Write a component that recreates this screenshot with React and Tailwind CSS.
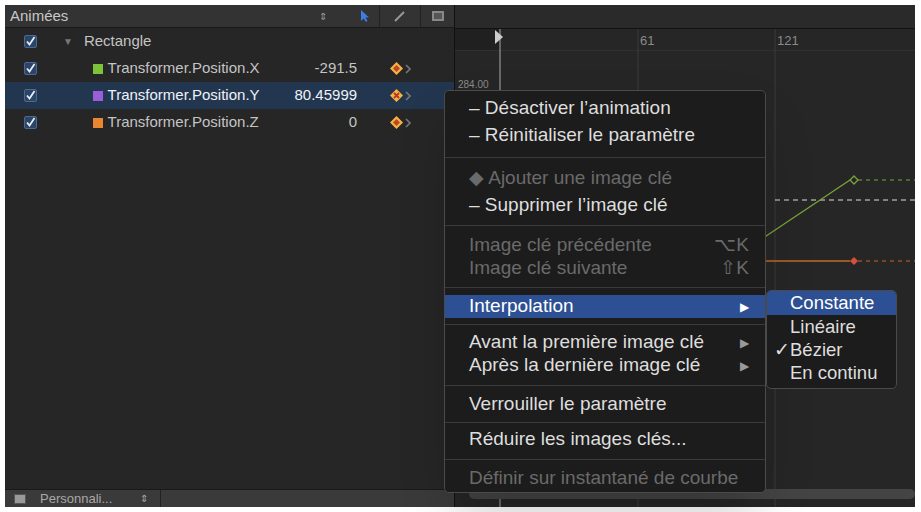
import React from "react";

const font = { fontFamily: '"Helvetica Neue", "Liberation Sans", Arial, sans-serif' };

const Check = () => (
  <div className="w-[13px] h-[13px] rounded-[2px] bg-[#2c4566] border border-[#4a6a94] flex items-center justify-center">
    <svg width="11" height="11" viewBox="0 0 11 11"><path d="M2 5.5 L4.5 8.5 L9.5 1" stroke="#e6eefa" strokeWidth="1.8" fill="none" /></svg>
  </div>
);

const Key = ({ x }) => (
  <div className="flex items-center gap-[1px]">
    <svg width="15" height="15" viewBox="0 0 15 15">
      <path d="M7.5 1 L14 7.5 L7.5 14 L1 7.5Z" fill="#f2b640" />
      <path d="M7.5 4 L11 7.5 L7.5 11 L4 7.5Z" fill={x ? "#f2b640" : "#c2432a"} />
      {x && <path d="M5 5 L10 10 M10 5 L5 10" stroke="#c2302a" strokeWidth="1.8" />}
    </svg>
    <svg width="6" height="10" viewBox="0 0 6 10"><path d="M1 1 L5 5 L1 9" stroke="#777" strokeWidth="1.6" fill="none" /></svg>
  </div>
);

const Row = ({ color, name, value, sel, x }) => (
  <div className={`h-[27px] flex items-center text-[15px] ${sel ? "bg-[#23364f] text-[#eef2f7]" : "text-[#c4c4c4]"}`}>
    <div className="w-[45px] pl-[19px]"><Check /></div>
    <div className="w-[245px] pl-[43px] flex items-center gap-[5px] whitespace-nowrap">
      <span className="w-[10px] h-[10px] shrink-0" style={{ background: color }} />
      {name}
    </div>
    <div className="w-[75px] text-right pr-[8px] overflow-hidden whitespace-nowrap">{value}</div>
    <div className="w-[90px] pl-[24px]"><Key x={x} /></div>
  </div>
);

const Item = ({ children, dim, sub, hi, right }) => (
  <div className={`h-[23px] flex items-center pl-[24px] pr-[16px] text-[19px] whitespace-nowrap ${hi ? "bg-[#2d4f93] text-white" : dim ? "text-[#6a6a6a]" : "text-[#dedede]"}`}>
    <span className="flex-1">{children}</span>
    {sub && <span className={`text-[12px] ${hi ? "text-white" : "text-[#9a9a9a]"}`}>▶</span>}
    {right && <span className="text-[#6a6a6a]">{right}</span>}
  </div>
);

const Sep = ({ h }) => (
  <div className="flex items-center" style={{ height: h }}>
    <div className="h-px w-full bg-[#3a3a3a]" />
  </div>
);

export default function App() {
  return (
    <div className="w-[921px] h-[512px] bg-white p-[5px] pr-[6px] pb-[5px] relative overflow-hidden" style={font}>
      <div className="flex h-full bg-[#262626]">
        {/* left panel */}
        <div className="w-[450px] flex flex-col border-r border-[#111]">
          <div className="h-[23px] bg-[#333] flex items-center text-[15px] text-[#c8c8c8] border-b border-[#1a1a1a]">
            <span className="pl-[5px] flex-1">Animées</span>
            <span className="w-[30px] text-[10px] text-[#999]">⇕</span>
            <svg className="w-[30px]" width="12" height="14" viewBox="0 0 12 14"><path d="M3 1 L3 12 L5.5 9.5 L8 13 L9.5 12 L7.5 8.5 L11 8.5Z" fill="#3d7ee0" /></svg>
            <div className="w-px h-full bg-[#222]" />
            <svg className="w-[40px]" width="14" height="14" viewBox="0 0 14 14"><path d="M2 12 L11 3" stroke="#999" strokeWidth="2" /></svg>
            <div className="w-px h-full bg-[#222]" />
            <div className="w-[33px] flex justify-center"><div className="w-[12px] h-[10px] border-2 border-[#888] bg-[#555]" /></div>
          </div>
          <div className="flex-1 relative">
            <div className="h-[27px] flex items-center text-[15px] text-[#c4c4c4]">
              <div className="w-[45px] pl-[19px]"><Check /></div>
              <span className="text-[10px] text-[#777] pl-[13px] pr-[11px]">▼</span>
              Rectangle
            </div>
            <Row color="#7ec13a" name="Transformer.Position.X" value="-291.5" />
            <Row color="#9a5ed8" name="Transformer.Position.Y" value="80.45999" sel x />
            <Row color="#e98632" name="Transformer.Position.Z" value="0" />
          </div>
          <div className="h-[18px] bg-[#3a3a3a] border-t border-[#1a1a1a] flex items-center text-[13px] text-[#a8a8a8]">
            <div className="ml-[9px] w-[12px] h-[10px] bg-[#999] border border-[#555]" />
            <span className="ml-[14px] w-[100px]">Personnali...</span>
            <span className="text-[10px] w-[20px]">⇕</span>
            <div className="w-px h-full bg-[#222]" />
          </div>
        </div>
        {/* graph panel */}
        <div className="flex-1 flex flex-col relative">
          <div className="h-[24px] bg-[#2a2a2a] border-b border-[#111]" />
          <div className="h-[22px] bg-[#262626] flex text-[13px] text-[#8a8a8a] relative border-b border-[#303030]">
            <div className="w-[45px] bg-[#202020]" />
            <span className="absolute left-[185px] top-[2px]">61</span>
            <span className="absolute left-[322px] top-[2px]">121</span>
          </div>
          <div className="flex-1 relative">
            <span className="absolute left-[3px] top-[26px] text-[10px] text-[#8a8a8a]">284.00</span>
          </div>
          <svg className="absolute left-0 top-0" width="460" height="502">
            <line x1="45" y1="24" x2="45" y2="502" stroke="#aaa" />
            <path d="M40 25 L48 32 L40 39Z" fill="#ccc" />
            <line x1="183" y1="24" x2="183" y2="502" stroke="#3a3a3a" />
            <line x1="320" y1="24" x2="320" y2="502" stroke="#3a3a3a" />
            <line x1="320" y1="195" x2="460" y2="195" stroke="#ddd" strokeDasharray="5 4" />
            <line x1="305" y1="235" x2="395" y2="175" stroke="#7aa33a" strokeWidth="1.3" />
            <line x1="403" y1="175" x2="460" y2="175" stroke="#7aa33a" strokeDasharray="4 4" />
            <path d="M399 171 L403 175 L399 179 L395 175Z" fill="#262626" stroke="#7aa33a" strokeWidth="1.3" />
            <line x1="305" y1="256" x2="395" y2="256" stroke="#c4682a" strokeWidth="1.3" />
            <line x1="403" y1="256" x2="460" y2="256" stroke="#c4682a" strokeDasharray="4 4" />
            <path d="M399 252 L403 256 L399 260 L395 256Z" fill="#d8503a" />
            <rect x="14" y="484" width="446" height="10" rx="5" fill="#444" />
          </svg>
        </div>
      </div>
      {/* context menu */}
      <div className="absolute left-[444px] top-[90px] w-[322px] h-[403px] bg-[#1c1c1c] border border-[#4a4a4a] rounded-[5px] pt-[6px] shadow-2xl overflow-hidden">
        <Item>– Désactiver l’animation</Item>
        <div className="h-[4px]" />
        <Item>– Réinitialiser le paramètre</Item>
        <Sep h={20} />
        <Item dim>◆ Ajouter une image clé</Item>
        <div className="h-[4px]" />
        <Item>– Supprimer l’image clé</Item>
        <Sep h={17} />
        <Item dim right="⌥K">Image clé précédente</Item>
        <Item dim right="⇧K">Image clé suivante</Item>
        <Sep h={15} />
        <Item hi sub>Interpolation</Item>
        <Sep h={13} />
        <Item sub>Avant la première image clé</Item>
        <Item sub>Après la dernière image clé</Item>
        <Sep h={16} />
        <Item>Verrouiller le paramètre</Item>
        <Sep h={12} />
        <Item>Réduire les images clés...</Item>
        <Sep h={16} />
        <Item dim>Définir sur instantané de courbe</Item>
      </div>
      <div className="absolute left-[766px] top-[290px] w-[131px] bg-[#1c1c1c] border border-[#4a4a4a] rounded-[5px] text-[18.5px] text-[#dedede] pb-[4px] overflow-hidden">
        <div className="h-[24px] bg-[#2d4f93] text-white pl-[23px] flex items-center">Constante</div>
        <div className="h-[23px] pl-[23px] flex items-center">Linéaire</div>
        <div className="h-[23px] pl-[7px] flex items-center"><span className="w-[16px]">✓</span>Bézier</div>
        <div className="h-[23px] pl-[23px] flex items-center">En continu</div>
      </div>
    </div>
  );
}
